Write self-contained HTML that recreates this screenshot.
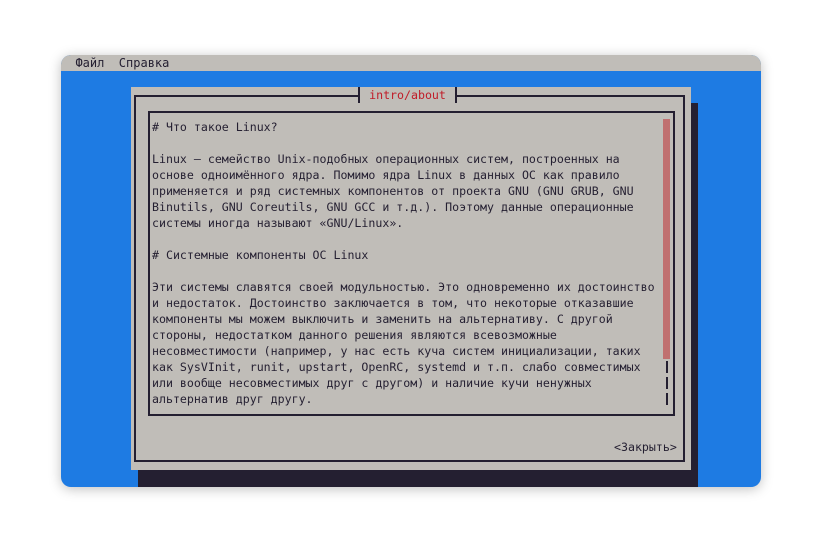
<!DOCTYPE html>
<html><head><meta charset="utf-8"><style>
html,body{margin:0;padding:0;width:822px;height:554px;background:#fff;overflow:hidden}
.win{position:absolute;left:61px;top:55px;width:700px;height:432px;border-radius:10px;overflow:hidden;background:#1e7be3;box-shadow:0 2px 12px rgba(0,0,0,.25)}
.menu{position:absolute;left:0;top:0;width:700px;height:16px;background:#c0bdb8;font:12px "DejaVu Sans Mono","Liberation Mono",monospace;color:#241f31;line-height:16px;white-space:pre}
.shadow{position:absolute;left:77px;top:48px;width:560px;height:400px;background:#241f31}
.dlg{position:absolute;left:70px;top:32px;width:560px;height:383px;background:#c0bdb8}
.b1{position:absolute;left:3px;top:8px;width:551px;height:367px;border:2px solid #241f31;box-sizing:border-box}
.title{position:absolute;left:227px;top:0;width:99px;height:16px;background:#c0bdb8;border-left:2px solid #241f31;border-right:2px solid #241f31;box-sizing:border-box;color:#c01c28;text-align:center;font:11.6px "DejaVu Sans Mono",monospace;line-height:16px}
.b2{position:absolute;left:17px;top:24px;width:527px;height:305px;border:2px solid #241f31;box-sizing:border-box}
.sb{position:absolute;left:532px;top:32px;width:7px;height:240px;background:#c07070}
.tick{position:absolute;left:535px;width:2px;height:12px;background:#241f31}
.t{position:absolute;left:21px;font:11.6px "DejaVu Sans Mono","Liberation Mono",monospace;color:#241f31;white-space:pre;line-height:16px}
</style></head><body>
<div class="win">
<div class="menu">  Файл  Справка</div>
<div class="shadow"></div>
<div class="dlg">
<div class="b1"></div>
<div class="title">intro/about</div>
<div class="b2"></div>
<div class="sb"></div>
<div class="tick" style="top:274px"></div>
<div class="tick" style="top:290px"></div>
<div class="tick" style="top:306px"></div>
<div class="t" style="top:32px"># Что такое Linux?

Linux – семейство Unix-подобных операционных систем, построенных на
основе одноимённого ядра. Помимо ядра Linux в данных ОС как правило
применяется и ряд системных компонентов от проекта GNU (GNU GRUB, GNU
Binutils, GNU Coreutils, GNU GCC и т.д.). Поэтому данные операционные
системы иногда называют «GNU/Linux».

# Системные компоненты ОС Linux

Эти системы славятся своей модульностью. Это одновременно их достоинство
и недостаток. Достоинство заключается в том, что некоторые отказавшие
компоненты мы можем выключить и заменить на альтернативу. С другой
стороны, недостатком данного решения являются всевозможные
несовместимости (например, у нас есть куча систем инициализации, таких
как SysVInit, runit, upstart, OpenRC, systemd и т.п. слабо совместимых
или вообще несовместимых друг с другом) и наличие кучи ненужных
альтернатив друг другу.</div>
<div class="t" style="top:352px;left:483px">&lt;Закрыть&gt;</div>
</div>
</div>
</body></html>
